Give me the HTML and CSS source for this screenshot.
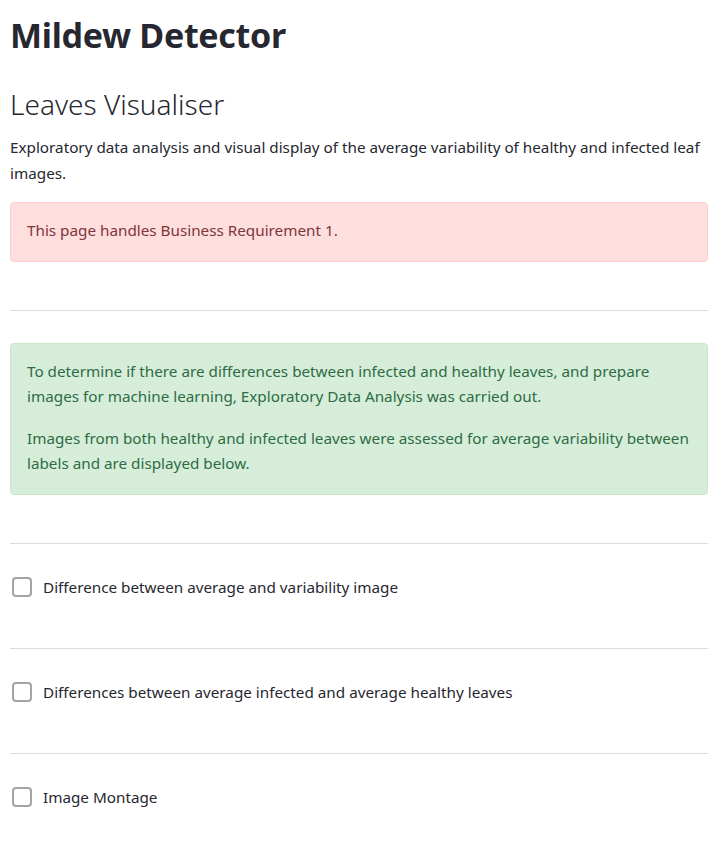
FILE: index.html
```html
<!DOCTYPE html>
<html>
<head>
<meta charset="utf-8">
<link rel="stylesheet" href="styles.css">
</head>
<body>
<main class="page">
  <h1 class="title">Mildew Detector</h1>
  <h2 class="subtitle">Leaves Visualiser</h2>
  <p class="text">Exploratory data analysis and visual display of the average variability of healthy and infected leaf images.</p>
  <div class="alert alert-error">
    <p>This page handles Business Requirement 1.</p>
  </div>
  <hr class="rule">
  <div class="alert alert-success">
    <p>To determine if there are differences between infected and healthy leaves, and prepare images for machine learning, Exploratory Data Analysis was carried out.</p>
    <p>Images from both healthy and infected leaves were assessed for average variability between labels and are displayed below.</p>
  </div>
  <hr class="rule rule-before-checks">
  <label class="check"><span class="box"></span><span>Difference between average and variability image</span></label>
  <hr class="rule rule-check">
  <label class="check"><span class="box"></span><span>Differences between average infected and average healthy leaves</span></label>
  <hr class="rule rule-check">
  <label class="check"><span class="box"></span><span>Image Montage</span></label>
</main>
</body>
</html>
```

FILE: styles.css
```css
html, body {
  margin: 0;
  padding: 0;
  background: #ffffff;
}
body {
  font-family: "Noto Sans", "Open Sans", sans-serif;
  color: #262730;
}
.page {
  width: 698px;
  margin-left: 10px;
  display: flex;
  flex-direction: column;
}
.title {
  font-size: 34px;
  font-weight: 700;
  line-height: 48px;
  margin: 11px 0 0 0;
  letter-spacing: -0.3px;
}
.subtitle {
  font-size: 28px;
  font-weight: 300;
  line-height: 36px;
  margin: 27px 0 0 0;
}
.text {
  font-size: 15.25px;
  line-height: 26px;
  margin: 12px 0 0 0;
}
.alert {
  border-radius: 4px;
  padding: 15px 16px 16px 16px;
  font-size: 15.25px;
  line-height: 25.6px;
}
.alert p {
  margin: 0;
}
.alert p + p {
  margin-top: 16px;
}
.alert-error {
  margin-top: 16px;
  padding-bottom: 17px;
  background: #ffdede;
  border: 1px solid #f9cfcf;
  color: #7d353b;
}
.alert-success {
  margin-top: 0;
  padding-bottom: 17px;
  background: #d6eed9;
  border: 1px solid #c8e6cc;
  color: #2e6b45;
}
.rule {
  border: none;
  border-top: 1px solid #dcdcdc;
  margin: 48px 0 32px 0;
  width: 100%;
}
.rule-before-checks {
  margin-bottom: 30px;
}
.rule-check {
  margin: 48px 0 30px 0;
}
.check {
  display: flex;
  align-items: center;
  gap: 11px;
  font-size: 15.25px;
  line-height: 26px;
  padding-left: 2px;
}
.box {
  width: 16px;
  height: 16px;
  border: 2px solid #a3a3a3;
  border-radius: 4px;
  background: #fff;
  flex: none;
}
```
